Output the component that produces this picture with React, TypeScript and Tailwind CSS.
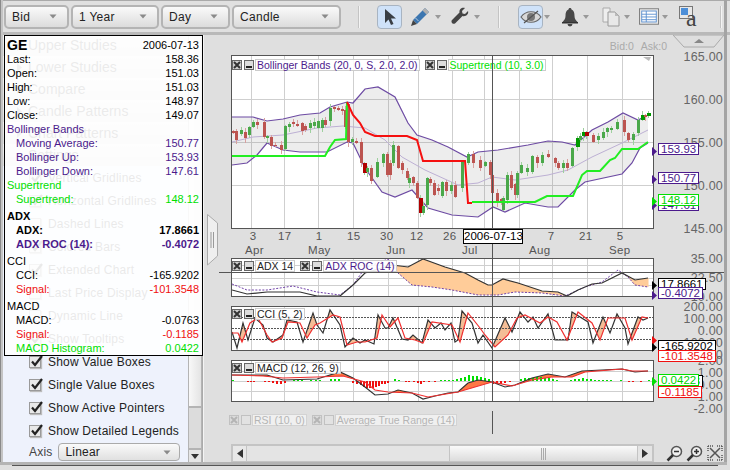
import React from "react";

type P = [number, number];
const upper: P[] = [[232,117],[253,117],[267,121],[283,119],[300,115],[320,113],[330,107],[347,102],[353,103],[365,89],[378,87],[395,97],[408,123],[417,135],[432,140],[448,147],[467,157],[478,152],[498,150],[528,145],[548,141],[562,142],[575,145],[592,130],[608,122],[623,113],[638,120],[648,115]];
const lower: P[] = [[232,165],[247,163],[257,155],[267,143],[283,150],[300,152],[327,152],[347,142],[353,143],[365,168],[382,192],[395,197],[412,190],[428,208],[452,215],[478,217],[493,207],[505,212],[525,203],[548,207],[558,207],[575,190],[585,182],[622,174],[632,163],[640,148],[648,143]];
const middle: P[] = [[232,142],[253,137],[283,135],[317,128],[343,126],[365,128],[385,140],[402,157],[425,170],[458,185],[478,183],[492,177],[515,180],[548,175],[568,170],[592,157],[622,143],[648,130]];
const stGreen1: P[] = [[232,156],[325,156],[330,147],[335,140],[346,139],[347,102]];
const stRed: P[] = [[347,102],[353,115],[360,123],[365,132],[375,136],[407,136],[417,140],[423,161],[465,161],[468,203],[472,203]];
const stGreen2: P[] = [[472,202],[535,202],[547,196],[573,196],[582,175],[587,171],[600,171],[610,160],[615,158],[622,149],[638,149],[648,142]];

const G = "#4aa84a", R = "#bc5450", DR = "#b00000", DG = "#009a00";
const candles: [number, number, number, string][] = [
[233,131,133,R],[236,131,140,R],[241,130,134,G],[245,132,138,R],[249,127,135,G],[253,122,127,G],[257,122,125,R],[264,122,137,R],[267,136,138,G],[271,137,146,R],[275,145,146,R],[281,145,150,R],[285,126,149,G],[289,124,127,G],[293,122,124,R],[297,124,126,R],[302,123,131,R],[305,126,130,R],[310,123,128,G],[314,122,126,G],[318,121,128,G],[322,120,128,G],[325,120,125,R],[330,108,121,G],[334,107,109,R],[338,108,110,R],[342,109,111,R],[345,110,127,R],[348,104,142,R],[352,139,142,G],[356,141,143,R],[361,142,163,R],[364,163,173,DR],[367,168,172,G],[371,168,181,R],[377,162,177,G],[383,154,163,G],[387,154,175,R],[390,163,175,R],[393,145,163,G],[398,146,168,R],[402,163,170,R],[407,171,178,R],[409,178,183,G],[413,177,183,R],[417,183,198,R],[420,198,213,DR],[423,206,213,G],[427,178,205,G],[430,179,183,R],[434,183,195,R],[438,188,191,R],[442,182,196,G],[446,182,191,R],[451,185,191,G],[455,185,197,R],[462,162,188,G],[468,154,163,G],[473,154,163,R],[480,160,168,R],[485,162,166,G],[490,162,175,R],[492,175,193,R],[497,193,202,R],[501,199,202,R],[503,198,210,G],[507,175,200,G],[511,175,188,R],[515,184,195,R],[517,173,195,G],[521,165,173,G],[527,168,172,G],[532,156,172,G],[537,157,163,R],[542,155,163,G],[548,154,157,R],[555,158,163,R],[558,163,168,R],[563,163,168,G],[567,163,168,R],[572,148,166,G],[577,138,147,DG],[580,136,140,G],[583,132,136,DG],[586,132,136,DR],[593,135,142,R],[598,136,140,G],[603,132,138,G],[607,128,132,G],[611,128,130,G],[617,122,129,G],[624,120,132,R],[628,133,140,R],[633,134,140,G],[638,120,133,G],[642,115,120,DG],[645,115,117,R],[648,113,116,DG]];

const adxB: P[] = [[232,290],[247,294],[267,292],[283,292],[300,292],[317,296],[340,296],[353,285],[365,273],[392,265],[408,267],[423,259],[445,267],[465,273],[478,280],[488,285],[492,285],[503,279],[518,283],[542,291],[558,292],[567,296],[578,290],[592,284],[602,283],[622,273],[635,280],[648,278]];
const adxP: P[] = [[232,284],[247,290],[267,290],[293,286],[317,292],[340,295],[353,285],[365,268],[388,259],[398,273],[412,285],[432,287],[452,290],[478,295],[498,295],[515,292],[542,293],[565,296],[585,287],[602,282],[618,270],[628,277],[635,285],[648,287]];
const cciB: P[] = [[232,332],[237,348],[243,323],[248,340],[255,318],[263,325],[267,338],[273,342],[283,335],[287,320],[297,322],[303,342],[313,313],[317,325],[323,333],[330,310],[340,325],[345,347],[353,338],[360,343],[365,340],[374,344],[378,315],[385,328],[388,328],[393,318],[402,339],[408,340],[413,335],[422,343],[428,320],[435,328],[441,323],[445,330],[451,323],[455,342],[458,340],[462,311],[472,323],[478,343],[483,335],[492,348],[505,318],[512,332],[520,312],[528,322],[533,317],[538,328],[548,314],[555,340],[568,340],[572,312],[588,322],[593,343],[603,317],[610,333],[617,314],[625,328],[628,344],[638,317],[643,320],[648,318]];
const cciR: P[] = [[232,333],[238,333],[242,342],[250,323],[258,318],[267,335],[272,342],[282,338],[288,322],[300,323],[307,338],[315,325],[320,323],[333,315],[340,317],[347,345],[357,342],[365,342],[377,338],[382,315],[390,327],[398,318],[405,338],[415,340],[423,343],[432,322],[452,325],[460,342],[468,313],[480,328],[485,335],[495,347],[508,335],[517,318],[525,315],[540,323],[548,317],[557,322],[567,340],[578,312],[592,323],[600,340],[608,318],[625,318],[632,340],[642,317],[648,318]];
const macdB: P[] = [[232,375],[267,375],[283,380],[317,379],[340,372],[353,378],[365,387],[375,395],[388,394],[398,390],[412,393],[423,399],[435,396],[448,393],[458,392],[468,383],[478,380],[492,382],[505,387],[515,385],[532,378],[548,374],[565,377],[582,371],[622,369],[635,372],[648,371]];
const macdR: P[] = [[232,375],[263,376],[283,378],[317,377],[343,376],[365,382],[375,390],[388,392],[412,393],[428,397],[458,392],[475,387],[492,382],[512,386],[532,380],[552,377],[572,377],[585,372],[622,369],[632,371],[648,371]];
const hist: [number, number][] = [[232,1],[247,-1],[250,-1],[253,-1],[264,-1],[268,-1],[272,-2],[276,-3],[280,-3],[284,-2],[293,1],[297,1],[301,1],[310,1],[315,1],[319,1],[330,2],[334,2],[338,2],[352,-2],[356,-3],[360,-4],[363,-6],[366,-7],[369,-7],[372,-7],[375,-6],[378,-5],[381,-3],[384,-3],[387,-2],[394,2],[398,1],[405,-1],[408,-1],[413,-1],[417,-2],[420,-3],[423,-1],[428,-1],[434,-1],[440,1],[444,1],[448,1],[452,1],[456,2],[460,3],[464,4],[468,6],[472,5],[476,5],[480,4],[484,3],[488,2],[492,-3],[496,-3],[500,-3],[504,-2],[509,-1],[520,2],[524,3],[528,3],[532,3],[536,4],[540,4],[544,3],[548,3],[552,2],[556,1],[570,1],[574,2],[578,2],[582,3],[586,2],[590,2],[594,1],[598,1],[602,1],[606,1],[610,1],[620,1],[628,-1],[632,-1],[640,-1],[648,1]];

const pts = (a: P[]) => a.map((p) => p.join(",")).join(" ");
const at = (a: P[], x: number) => {
  for (let i = 1; i < a.length; i++) {
    if (x <= a[i][0]) {
      const [x0, y0] = a[i - 1];
      const [x1, y1] = a[i];
      return y0 + ((y1 - y0) * (x - x0)) / (x1 - x0 || 1);
    }
  }
  return a[a.length - 1][1];
};
const between = (top: P[], bot: P[]) => {
  let d = "";
  for (let x = 232; x <= 648; x++) {
    const a = at(top, x);
    const b = at(bot, x);
    if (a < b - 0.3) d += `M${x} ${a.toFixed(1)}V${b.toFixed(1)}`;
  }
  return d;
};

function Grid({ y0, y1, h }: { y0: number; y1: number; h: number[] }) {
  const v = [251, 284, 318, 353, 388, 418, 452, 484, 519, 552, 587, 622];
  return (
    <g stroke="#cfcfcf" strokeWidth="1" shapeRendering="crispEdges">
      {v.map((x) => <line key={x} x1={x + 0.5} x2={x + 0.5} y1={y0} y2={y1} />)}
      {h.map((y) => <line key={y} x1={231} x2={655} y1={y + 0.5} y2={y + 0.5} />)}
    </g>
  );
}

function MainChart() {
  return (
    <svg viewBox="232 56 421 172" width="421" height="172" className="block">
      <Grid y0={56} y1={228} h={[99, 142, 185]} />
      <polygon points={`${pts(upper)} ${pts([...lower].reverse())}`} fill="#7f7f7f" fillOpacity="0.14" />
      <polyline points={pts(middle)} fill="none" stroke="#bdb0d4" strokeWidth="1" />
      <polyline points={pts(upper)} fill="none" stroke="#6d4ba3" strokeWidth="1.2" />
      <polyline points={pts(lower)} fill="none" stroke="#6d4ba3" strokeWidth="1.2" />
      <g shapeRendering="crispEdges">
        {candles.map(([x, t, b, c], i) => (
          <g key={i}>
            <line x1={x + 0.5} x2={x + 0.5} y1={t - 1 - (i % 4)} y2={b + 1 + ((i * 3) % 5)} stroke={c === R ? "#d8a0a0" : "#9ed09e"} />
            <rect x={x - 1} y={t} width={c === DR || c === DG ? 4 : 3} height={b - t} fill={c} />
          </g>
        ))}
      </g>
      <polyline points={pts(stGreen1)} fill="none" stroke="#22ee22" strokeWidth="2" />
      <polyline points={pts(stRed)} fill="none" stroke="#f51010" strokeWidth="2" />
      <polyline points={pts(stGreen2)} fill="none" stroke="#22ee22" strokeWidth="2" />
      <path d="M649 61l-6-4h8z" fill="#bbb" />
    </svg>
  );
}

function AdxChart() {
  return (
    <svg viewBox="232 259 421 37" width="421" height="37" className="block">
      <Grid y0={259} y1={296} h={[265, 278, 285]} />
      <path d={between(adxB, adxP)} stroke="#ffcc99" strokeWidth="1.05" fill="none" />
      <polyline points={pts(adxP)} fill="none" stroke="#7040a8" strokeWidth="1" strokeDasharray="2 1.5" />
      <polyline points={pts(adxB)} fill="none" stroke="#333" strokeWidth="1.2" />
    </svg>
  );
}

function CciChart() {
  return (
    <svg viewBox="232 307 421 43" width="421" height="43" className="block">
      <Grid y0={307} y1={350} h={[]} />
      <path d={between(cciB, cciR)} stroke="#f4bd96" strokeWidth="1.05" fill="none" />
      <g stroke="#555" strokeDasharray="2 1" shapeRendering="crispEdges">
        <line x1="232" x2="653" y1="317.5" y2="317.5" />
        <line x1="232" x2="653" y1="328.5" y2="328.5" />
        <line x1="232" x2="653" y1="339.5" y2="339.5" />
      </g>
      <polyline points={pts(cciB)} fill="none" stroke="#333" strokeWidth="1.2" />
      <polyline points={pts(cciR)} fill="none" stroke="#f03030" strokeWidth="1.2" />
    </svg>
  );
}

function MacdChart() {
  return (
    <svg viewBox="232 361 421 40" width="421" height="40" className="block">
      <Grid y0={361} y1={401} h={[371, 381, 391]} />
      <path d={between(macdB, macdR)} stroke="#ff7744" strokeWidth="1.05" fill="none" />
      <g shapeRendering="crispEdges">
        {hist.map(([x, h], i) => (
          <rect key={i} x={x} y={h > 0 ? 381 - h : 381} width="2" height={Math.abs(h)} fill={h > 0 ? "#00e000" : "#f01010"} />
        ))}
      </g>
      <polyline points={pts(macdB)} fill="none" stroke="#333" strokeWidth="1.2" />
      <polyline points={pts(macdR)} fill="none" stroke="#f03030" strokeWidth="1.2" />
    </svg>
  );
}

function Caret({ className = "" }: { className?: string }) {
  return (
    <svg width="8" height="5" viewBox="0 0 8 5" className={className}>
      <path d="M0.5 0.5h7L4 4.5z" fill="#8a8a8a" />
    </svg>
  );
}

function Pill({ label, w }: { label: string; w: string }) {
  return (
    <div className={`${w} h-[24px] flex items-center justify-between pl-[6px] pr-[10px] rounded-[5px] border-2 border-[#b4b4b4] bg-gradient-to-b from-[#fafafa] to-[#dcdcdc] text-[12px] tracking-[0.3px] text-[#222]`}>
      <span>{label}</span>
      <Caret />
    </div>
  );
}

function ToolBtn({ children, active, caret, className = "" }: { children: React.ReactNode; active?: boolean; caret?: string; className?: string }) {
  return (
    <div className={`flex items-center ${className}`}>
      <div className={`w-[25px] h-[24px] flex items-center justify-center rounded-[4px] ${active ? "bg-[#cfe2f9] border border-[#a8b4c2]" : ""}`}>{children}</div>
      {caret ? <svg width="6" height="4" viewBox="0 0 6 4" className={caret}><path d="M0 0h6L3 4z" fill="#999" /></svg> : null}
    </div>
  );
}

function MiniBtns({ dim }: { dim?: boolean }) {
  return (
    <div className={`flex items-center gap-[2px] ${dim ? "opacity-40" : ""}`}>
      <div className="w-[10px] h-[10px] bg-[#cfcfcf] border border-[#666] flex items-center justify-center">
        <svg width="8" height="8" viewBox="0 0 8 8"><path d="M1 1l6 6M7 1L1 7" stroke="#333" strokeWidth="2" /></svg>
      </div>
      <div className={`w-[10px] h-[10px] border border-[#666] flex items-end justify-center pb-[1px] ${dim ? "bg-[#eee]" : "bg-[#ddd]"}`}>
        {dim ? null : <div className="w-[6px] h-[2px] bg-[#222]" />}
      </div>
    </div>
  );
}

function Legend({ text, color, dim }: { text: string; color: string; dim?: boolean }) {
  return (
    <div className="flex items-center gap-[1px]">
      <MiniBtns dim={dim} />
      <span className={`h-[12px] leading-[11px] bg-white/90 border border-[#ccc] px-[1px] text-[10.5px] whitespace-nowrap ${color}`}>{text}</span>
    </div>
  );
}

function Check({ label, on }: { label: string; on?: boolean }) {
  return (
    <div className="h-[23px] flex items-center pl-[26px] gap-[7px] text-[12px] tracking-[0.2px] text-[#222]">
      <div className="w-[12px] h-[12px] bg-[#e8e8e8] border border-[#9a9a9a] shadow-[1px_1px_1px_#bbb] relative">
        {on ? (
          <svg width="14" height="13" viewBox="0 0 14 13" className="absolute left-0 -top-[2px]"><path d="M2 6.500l3 3.500 7-9" fill="none" stroke="#222" strokeWidth="2.200" /></svg>
        ) : null}
      </div>
      <span>{label}</span>
    </div>
  );
}

function Section({ label, open, h = "h-[22px]" }: { label: string; open?: boolean; h?: string }) {
  return (
    <div className={`${h} flex items-center pl-[25px] text-[14px] text-[#333] bg-gradient-to-b from-[#f2f2f2] to-[#dddddd] relative`}>
      <svg width="7" height="9" viewBox="0 0 7 9" className="absolute left-[13px] top-[7px]">
        {open ? <path d="M0 2h7L3.500 7z" fill="#777" /> : <path d="M1 0l5 4.500L1 9z" fill="#777" />}
      </svg>
      {label}
    </div>
  );
}

function Row({ l, r, color = "text-black", indent, bold, head }: { l: string; r?: string; color?: string; indent?: boolean; bold?: boolean; head?: boolean }) {
  return (
    <div className={`h-[14px] leading-[14px] flex justify-between whitespace-nowrap ${color} ${bold ? "font-bold" : ""} ${indent ? "pl-[9px]" : ""} ${head ? "mt-[3px]" : ""}`}>
      <span>{l}</span>
      {r ? <span>{r}</span> : null}
    </div>
  );
}

function VBox({ text, pos, color }: { text: string; pos: string; color: string }) {
  return (
    <div className={`absolute ${pos} h-[12px] bg-white border px-[2px] leading-[10px] text-[11.5px] ${color}`}>{text}</div>
  );
}

function Ptr({ pos, color }: { pos: string; color: string }) {
  return (
    <svg width="5" height="9" viewBox="0 0 5 9" className={`absolute ${pos}`}><path d="M0 0l5 4.500L0 9z" fill={color} /></svg>
  );
}

function AxisCol({ labels, h }: { labels: string[]; h: string }) {
  return (
    <div className={`${h} w-[69px] -my-[6px] flex flex-col justify-between items-end text-[12.5px] leading-[12px] tracking-[0.2px] text-[#666]`}>
      {labels.map((l) => <span key={l}>{l}</span>)}
    </div>
  );
}

function Sep({ className }: { className: string }) {
  return <div className={`w-[2px] h-[22px] bg-[#f4f4f4] border-l border-[#c4c4c4] ${className}`} />;
}

export default function App() {
  return (
    <div className="relative flex w-[730px] h-[470px] overflow-hidden bg-[#dfdfdf] font-['Liberation_Sans',Arial,sans-serif]">
      <div className="w-[3px] h-[463px] bg-[#c4c4c4] border-l border-l-[#8a8a8a]" />
      <div className="flex-1 min-w-0">
        {/* toolbar */}
        <div className="h-[35px] border-t border-t-[#aaaaaa] border-b-[3px] border-b-[#b9b9b9] flex items-center pl-[1px] bg-[#e0e0e0]">
          <div className="flex items-center gap-[2px]">
            <Pill label="Bid" w="w-[65px]" />
            <Pill label="1 Year" w="w-[88px]" />
            <Pill label="Day" w="w-[69px]" />
            <Pill label="Candle" w="w-[109px]" />
          </div>
          <Sep className="ml-[17px]" />
          <ToolBtn active className="ml-[17px]">
            <svg width="16" height="18" viewBox="0 0 16 18"><path d="M3 1v14l3.500-3.500L9 17l2.500-1-2.500-5.500h5z" fill="#3a3f45" /></svg>
          </ToolBtn>
          <ToolBtn caret="ml-[2px]" className="ml-[6px]">
            <svg width="21" height="21" viewBox="0 0 21 21">
              <path d="M15 2l4 4L7 18l-4-4z" fill="#3c76b0" />
              <path d="M15 2l4 4-2.500 2.500-4-4z" fill="#b0b0b0" />
              <path d="M5.500 12l3 3" stroke="#bcd" />
              <path d="M1 20l2-6 4 4z" fill="#444" />
            </svg>
          </ToolBtn>
          <ToolBtn caret="ml-[2px]" className="ml-[6px]">
            <svg width="20" height="20" viewBox="0 0 20 20"><path d="M18 4l-3 3-2.500-.5L12 4l3-3c-3-1-6 1-5.500 4.500L2 13c-1.500 1.500.5 5 3 3.500l7.500-7.500C16 10 19 7 18 4z" fill="#454545" /></svg>
          </ToolBtn>
          <Sep className="ml-[18px]" />
          <ToolBtn active caret="ml-[1px]" className="ml-[18px]">
            <svg width="22" height="16" viewBox="0 0 22 16">
              <path d="M1 8c5-7 15-7 20 0-5 7-15 7-20 0z" fill="#d8d8d8" stroke="#666" strokeWidth="1.200" />
              <circle cx="11" cy="8" r="4" fill="#777" />
              <path d="M4 14L18 2" stroke="#555" strokeWidth="1.200" />
            </svg>
          </ToolBtn>
          <ToolBtn caret="ml-[1px]" className="ml-[7px]">
            <svg width="18" height="20" viewBox="0 0 18 20"><path d="M9 1c-1 0-1.500.7-1.500 1.500C5 3.500 4.500 6 4.500 9c0 3-1.500 4-3 6h15c-1.500-2-3-3-3-6 0-3-.5-5.500-3-6.500C10.500 1.700 10 1 9 1z" fill="#484848" /><rect x="1" y="15" width="16" height="1.500" fill="#333" /><path d="M6.500 17h5a2.500 2.500 0 0 1-5 0z" fill="#444" /></svg>
          </ToolBtn>
          <ToolBtn caret="ml-[1px]" className="ml-[9px]">
            <svg width="18" height="20" viewBox="0 0 18 20"><path d="M1 1h7v14H1z" fill="#eee" stroke="#aaa" /><path d="M6 5h7l4 4v10H6z" fill="#e8e8e8" stroke="#999" /><path d="M13 5v4h4z" fill="#bbb" /></svg>
          </ToolBtn>
          <ToolBtn caret="ml-[1px]" className="ml-[6px]">
            <svg width="20" height="17" viewBox="0 0 22 18"><rect x="0.500" y="0.500" width="21" height="17" fill="#e8e8e8" stroke="#777" /><rect x="3" y="3" width="16" height="12" fill="#fff" stroke="#5a8fd0" /><path d="M3 6.500h16M3 9.500h16M3 12.500h16M8 3v12" stroke="#5a8fd0" /></svg>
          </ToolBtn>
          <div className="w-[20px] h-[24px] relative ml-[11px]">
            <svg width="14" height="14" viewBox="0 0 14 14" className="absolute left-0 top-[1px]"><rect x="0.500" y="0.500" width="13" height="12" fill="#e8e8e8" stroke="#777" /><rect x="2" y="2" width="7" height="7" fill="#4d8fd8" /></svg>
            <span className="absolute left-[7px] top-[1px] text-[24px] leading-[24px] text-[#444] font-['Liberation_Serif',serif]">a</span>
          </div>
          <Sep className="ml-[21px]" />
        </div>

        <div className="flex h-[428px]">
          {/* sidebar */}
          <div className="w-[200px] flex border-r border-r-[#aaa]">
            <div className="w-[185px] bg-[#eef2fc]">
              <Section label="Upper Studies" h="h-[21px]" />
              <Section label="Lower Studies" />
              <Section label="Compare" />
              <Section label="Candle Patterns" />
              <Section label="Chart Patterns" />
              <Section label="Settings" open />
              <Check label="Vertical Gridlines" on />
              <Check label="Horizontal Gridlines" on />
              <Check label="Dashed Lines" />
              <Check label="Colored Bars" on />
              <Check label="Extended Chart" on />
              <Check label="Last Price Display" />
              <Check label="Dynamic Line" />
              <Check label="Show Tooltips" on />
              <Check label="Show Value Boxes" on />
              <Check label="Single Value Boxes" on />
              <Check label="Show Active Pointers" on />
              <Check label="Show Detailed Legends" on />
              <div className="h-[20px] flex items-center pl-[26px] gap-[6px] text-[12px] tracking-[0.2px] text-[#444]">
                <span>Axis</span>
                <div className="w-[122px] h-[18px] rounded-[4px] border border-[#aaa] bg-gradient-to-b from-[#fafafa] to-[#e0e0e0] flex items-center justify-between pl-[6px] pr-[8px] text-[#222]">
                  <span>Linear</span>
                  <Caret />
                </div>
              </div>
            </div>
            <div className="w-[14px] flex flex-col bg-[#dcdcdc] border-x border-[#b4b4b4]">
              <div className="h-[373px] bg-gradient-to-r from-[#f8f8f8] to-[#e4e4e4] border-b-2 border-[#b4b4b4]" />
              <div className="flex-1" />
              <div className="h-[15px] bg-[#e6e6e6] border-t-2 border-[#b4b4b4] flex items-center justify-center">
                <svg width="8" height="5" viewBox="0 0 8 5"><path d="M0 0h8L4 5z" fill="#333" /></svg>
              </div>
            </div>
          </div>

          {/* charts */}
          <div className="relative flex-1 border-l border-l-[#f4f4f4] pl-[27px]">
            <div className="h-[20px] w-[436px] flex justify-end gap-[7px] items-start pt-[5px] text-[10.5px] leading-[12px] text-[#aaa]">
              <span>Bid:0</span>
              <span>Ask:0</span>
            </div>
            <div className="flex items-stretch">
              <div className="relative w-[423px] h-[174px] border border-[#555] bg-white">
                <MainChart />
                <div className="absolute left-0 top-[3px] flex gap-[5px]">
                  <Legend text="Bollinger Bands (20, 0, S, 2.0, 2.0)" color="text-[#4b1a8c]" />
                  <Legend text="Supertrend (10, 3.0)" color="text-[#00e000]" />
                </div>
              </div>
              <div className="mt-[2px]"><AxisCol labels={["165.00", "160.00", "155.00", "150.00", "145.00"]} h="h-[184px]" /></div>
            </div>

            <div className="h-[29px] w-[423px] pt-[2px] text-[11.5px] tracking-[0.3px] leading-[11px] text-[#555] grid grid-cols-[repeat(423,1px)]">
              <div className="col-start-[18] col-span-10 w-[10px] text-center whitespace-nowrap">3</div>
              <div className="col-start-[48] col-span-10 w-[12px] text-center whitespace-nowrap">17</div>
              <div className="col-start-[84] col-span-10 w-[10px] text-center whitespace-nowrap">1</div>
              <div className="col-start-[117] col-span-10 w-[12px] text-center whitespace-nowrap">15</div>
              <div className="col-start-[150] col-span-10 w-[12px] text-center whitespace-nowrap">30</div>
              <div className="col-start-[180] col-span-10 w-[12px] text-center whitespace-nowrap">12</div>
              <div className="col-start-[213] col-span-10 w-[12px] text-center whitespace-nowrap">26</div>
              <div className="col-start-[316] col-span-10 w-[10px] text-center whitespace-nowrap">7</div>
              <div className="col-start-[349] col-span-10 w-[12px] text-center whitespace-nowrap">21</div>
              <div className="col-start-[385] col-span-10 w-[10px] text-center whitespace-nowrap">5</div>
              <div className="row-start-2 col-start-[15] col-span-10 whitespace-nowrap">Apr</div>
              <div className="row-start-2 col-start-[78] col-span-10 whitespace-nowrap">May</div>
              <div className="row-start-2 col-start-[156] col-span-10 whitespace-nowrap">Jun</div>
              <div className="row-start-2 col-start-[232] col-span-10 whitespace-nowrap">Jul</div>
              <div className="row-start-2 col-start-[299] col-span-10 whitespace-nowrap">Aug</div>
              <div className="row-start-2 col-start-[379] col-span-10 whitespace-nowrap">Sep</div>
            </div>

            <div className="flex items-stretch">
              <div className="relative w-[423px] h-[39px] border border-[#555] bg-white">
                <AdxChart />
                <div className="absolute left-0 top-[1px] flex gap-[5px]">
                  <Legend text="ADX 14" color="text-[#222]" />
                  <Legend text="ADX ROC (14)" color="text-[#4b1a8c]" />
                </div>
              </div>
              <div className="mt-[1px]"><AxisCol labels={["35.00", "22.50", "10.00"]} h="h-[50px]" /></div>
            </div>
            <div className="h-[9px]" />
            <div className="flex items-stretch">
              <div className="relative w-[423px] h-[45px] border border-[#555] bg-white">
                <CciChart />
                <div className="absolute left-0 top-[1px]"><Legend text="CCI (5, 2)" color="text-[#222]" /></div>
              </div>
              <div className="mt-[1px]"><AxisCol labels={["200.00", "100.00", "0.00", "-100.00", "-200.00"]} h="h-[56px]" /></div>
            </div>
            <div className="h-[9px]" />
            <div className="flex items-stretch">
              <div className="relative w-[423px] h-[42px] border border-[#555] bg-white">
                <MacdChart />
                <div className="absolute left-0 top-[1px]"><Legend text="MACD (12, 26, 9)" color="text-[#222]" /></div>
              </div>
              <div className="mt-[1px]"><AxisCol labels={["2.00", "1.00", "0.00", "-1.00", "-2.00"]} h="h-[53px]" /></div>
            </div>
            <div className="h-[12px]" />
            <div className="flex gap-[5px] opacity-60 -ml-[2px]">
              <Legend dim text="RSI (10, 0)" color="text-[#999]" />
              <Legend dim text="Average True Range (14)" color="text-[#999]" />
            </div>

            <div className="mt-[18px] flex items-center">
              <div className="w-[423px] h-[19px] border-2 border-[#c4c4c4] flex bg-[#e4e4e4]">
                <div className="w-[14px] border-r border-[#c4c4c4] flex items-center justify-center bg-[#e8e8e8]">
                  <svg width="6" height="9" viewBox="0 0 6 9"><path d="M6 0v9L0 4.500z" fill="#333" /></svg>
                </div>
                <div className="w-[202px]" />
                <div className="w-[189px] bg-gradient-to-b from-[#fafafa] to-[#dcdcdc] border-x border-[#c4c4c4] flex items-center justify-center">
                  <div className="w-[5px] h-[12px] border-x border-[#aaa] flex justify-center"><div className="w-px bg-[#aaa]" /></div>
                </div>
                <div className="flex-1 flex items-center justify-center">
                  <svg width="6" height="9" viewBox="0 0 6 9"><path d="M0 0v9l6-4.500z" fill="#333" /></svg>
                </div>
              </div>
              <div className="ml-[12px] flex gap-[3px]">
                {[0, 1].map((i) => (
                  <svg key={i} width="17" height="17" viewBox="0 0 17 17">
                    <circle cx="10.500" cy="6.500" r="5" fill="#f0f0f0" stroke="#555" strokeWidth="1.500" />
                    <path d="M7 10l-5.500 5.500" stroke="#333" strokeWidth="2.500" />
                    <path d="M8 6.500h5" stroke="#333" strokeWidth="1.500" />
                    {i === 1 ? <path d="M10.500 4v5" stroke="#333" strokeWidth="1.500" /> : null}
                  </svg>
                ))}
                <svg width="16" height="16" viewBox="0 0 16 16" className="ml-[1px]">
                  <path d="M3 3l10 10M13 3L3 13" stroke="#555" strokeWidth="1.500" />
                  <path d="M1 1h5M1 1v5M15 1h-5M15 1v5M1 15h5M1 15v-5M15 15h-5M15 15v-5" stroke="#555" strokeWidth="1.500" strokeDasharray="1 1" />
                </svg>
              </div>
            </div>
          </div>
        </div>
      </div>

      {/* window frame */}
      <div className="absolute left-[724px] top-0 w-[3px] h-[463px] bg-[#a4a4a4]" />
      <div className="absolute left-0 top-[462px] w-[727px] h-[3px] bg-[#b4b4b4]" />
      <div className="absolute left-[12px] top-[465px] w-[706px] h-px bg-[#555]" />

      {/* chart toggle handle */}
      <svg width="11" height="52" viewBox="0 0 11 52" className="absolute left-[207px] top-[214px]">
        <path d="M0.500 0.500L10.500 9v33L.500 51z" fill="#efefef" stroke="#aaa" />
        <path d="M4 18v16M6.500 18v16" stroke="#999" />
      </svg>

      {/* top collapse tab */}
      <svg width="52" height="13" viewBox="0 0 52 13" className="absolute left-[673px] top-[35px]">
        <path d="M0 0h51l-10 12H11z" fill="#dedede" stroke="#aaa" />
        <path d="M21 8l5-4 5 4z" fill="#888" />
      </svg>

      {/* crosshair */}
      <div className="absolute left-[492px] top-[55px] w-px h-[346px] bg-[#555]" />
      <div className="absolute left-[492px] top-[411px] w-px h-[23px] bg-[#555]" />
      <div className="absolute left-[219px] top-[272px] w-[505px] h-px bg-[#555]" />

      {/* date tooltip */}
      <div className="absolute left-[463px] top-[229px] h-[15px] w-[60px] bg-white border border-black text-[11.5px] leading-[13px] text-center text-black whitespace-nowrap">2006-07-13</div>

      {/* value boxes */}
      <VBox text="147.61" pos="left-[658px] top-[199px]" color="border-[#4b1a8c] text-[#4b1a8c]" />
      <VBox text="153.93" pos="left-[658px] top-[143px]" color="border-[#4b1a8c] text-[#4b1a8c]" />
      <VBox text="150.77" pos="left-[658px] top-[172px]" color="border-[#4b1a8c] text-[#4b1a8c]" />
      <VBox text="148.12" pos="left-[658px] top-[194px]" color="border-[#00e000] text-[#00d000]" />
      <VBox text="17.8661" pos="left-[658px] top-[278px]" color="border-black text-black" />
      <VBox text="-0.4072" pos="left-[658px] top-[287px]" color="border-[#4b1a8c] text-[#4b1a8c]" />
      <VBox text="-165.9202" pos="left-[658px] top-[340px]" color="border-black text-black" />
      <VBox text="-101.3548" pos="left-[658px] top-[350px]" color="border-[#f01010] text-[#f01010]" />
      <VBox text="-0.0763" pos="left-[658px] top-[375px]" color="border-black text-black" />
      <VBox text="0.0422" pos="left-[658px] top-[374px]" color="border-[#00e000] text-[#00d000]" />
      <VBox text="-0.1185" pos="left-[658px] top-[386px]" color="border-[#f01010] text-[#f01010]" />
      <Ptr pos="left-[652px] top-[147px]" color="#4b1a8c" />
      <Ptr pos="left-[652px] top-[175px]" color="#4b1a8c" />
      <Ptr pos="left-[652px] top-[201px]" color="#4b1a8c" />
      <Ptr pos="left-[652px] top-[197px]" color="#00e000" />
      <Ptr pos="left-[652px] top-[281px]" color="#000" />
      <Ptr pos="left-[652px] top-[291px]" color="#4b1a8c" />
      <Ptr pos="left-[652px] top-[336px]" color="#f01010" />
      <Ptr pos="left-[652px] top-[343px]" color="#000" />
      <Ptr pos="left-[652px] top-[377px]" color="#00e000" />

      {/* info panel */}
      <div className="absolute left-[4px] top-[35px] w-[199px] h-[321px] border-[1.5px] border-black bg-white/90 pl-[2px] pr-[3px] pt-[2px] text-[11px] text-black">
        <div className="h-[14px] flex justify-between items-center">
          <span className="text-[14px] font-bold leading-[14px]">GE</span>
          <span>2006-07-13</span>
        </div>
        <Row l="Last:" r="158.36" />
        <Row l="Open:" r="151.03" />
        <Row l="High:" r="151.03" />
        <Row l="Low:" r="148.97" />
        <Row l="Close:" r="149.07" />
        <Row l="Bollinger Bands" color="text-[#4b1a8c]" />
        <Row l="Moving Average:" r="150.77" color="text-[#4b1a8c]" indent />
        <Row l="Bollinger Up:" r="153.93" color="text-[#4b1a8c]" indent />
        <Row l="Bollinger Down:" r="147.61" color="text-[#4b1a8c]" indent />
        <Row l="Supertrend" color="text-[#00e000]" />
        <Row l="Supertrend:" r="148.12" color="text-[#00e000]" indent />
        <Row l="ADX" bold head />
        <Row l="ADX:" r="17.8661" bold indent />
        <Row l="ADX ROC (14):" r="-0.4072" bold indent color="text-[#4b1a8c]" />
        <Row l="CCI" head />
        <Row l="CCI:" r="-165.9202" indent />
        <Row l="Signal:" r="-101.3548" indent color="text-[#f01010]" />
        <Row l="MACD" head />
        <Row l="MACD:" r="-0.0763" indent />
        <Row l="Signal:" r="-0.1185" indent color="text-[#f01010]" />
        <Row l="MACD Histogram:" r="0.0422" indent color="text-[#00e000]" />
      </div>
    </div>
  );
}
